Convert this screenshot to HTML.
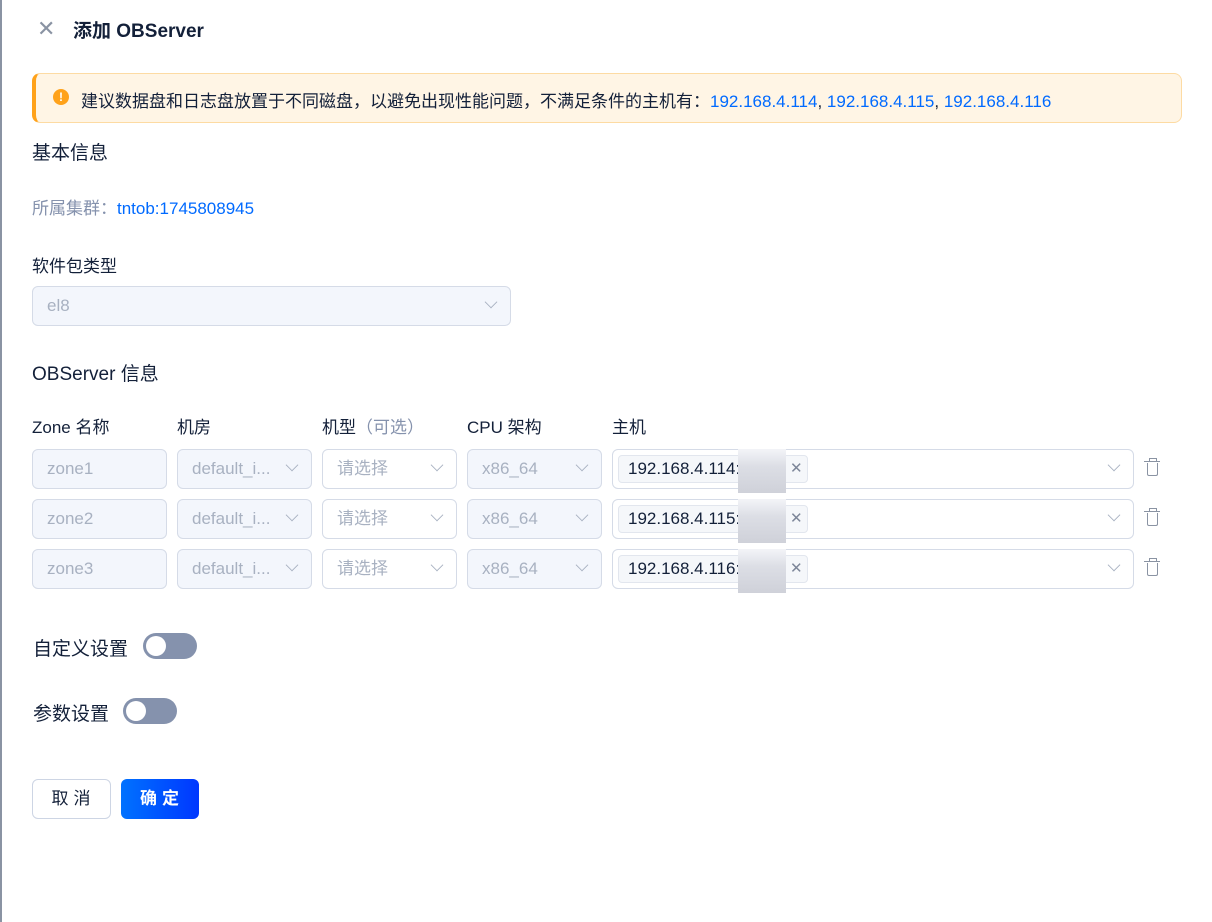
<!DOCTYPE html>
<html><head><meta charset="utf-8"><style>
*{box-sizing:border-box;margin:0;padding:0}
body{width:1212px;height:922px;background:#fff;font-family:"Liberation Sans","Noto Sans CJK SC",sans-serif;color:#132039;position:relative;overflow:hidden;font-size:17px}
.a{position:absolute}
.lb{border-left:2px solid #8a93a3;position:absolute;left:0;top:0;height:922px}
.inp{position:absolute;height:40px;border:1px solid #d5dbe7;border-radius:6px;background:#f3f6fc;color:#a8b1c1;font-size:17px;line-height:38px;padding-left:14px}
.arr{position:absolute;right:14px;top:10px;width:10px;height:10px;border-right:1.3px solid #a8b1c1;border-bottom:1.3px solid #a8b1c1;transform:rotate(45deg) scale(.9)}
.host{background:#fff;border-color:#d5dbe7;color:#132039}
.tag{position:absolute;left:5px;top:5px;height:28px;width:190px;background:#f5f7fa;border:1px solid #e2e6ee;border-radius:4px;font-size:17px;line-height:26px;padding-left:9px}
.blur{position:absolute;left:119px;top:-7px;width:48px;height:44px;background:linear-gradient(#f3f4f8,#dcdee5 40%,#cfd1d9)}
.x{position:absolute;left:171px;top:0;color:#7d8699;font-size:15px}
.trash{position:absolute;width:11px;height:13px;border:1.5px solid #8a93a3;border-top:none;border-radius:0 0 2px 2px}
.trash:before{content:"";position:absolute;left:-4px;top:-2px;width:16px;border-top:1.5px solid #8a93a3}
.trash:after{content:"";position:absolute;left:1px;top:-5px;width:6px;height:3px;border:1.5px solid #8a93a3;border-bottom:none}
.sw{position:absolute;width:54px;height:26px;border-radius:13px;background:#8592ad}
.sw:after{content:"";position:absolute;left:3px;top:3px;width:20px;height:20px;border-radius:50%;background:#fff}
.h{font-size:19px}
</style></head><body>
<div class="lb"></div>
<div class="a" style="left:37px;top:19px;font-size:22px;color:#8a93a3;line-height:20px;font-weight:300">✕</div>
<div class="a" style="left:73px;top:16px;font-size:19px;font-weight:bold">添加 OBServer</div>
<div class="a" style="left:32px;top:73px;width:1150px;height:50px;background:#fff5e5;border:1px solid #fddba3;border-left:4px solid #ffa21a;border-radius:8px"></div>
<div class="a" style="left:53px;top:89px;width:16px;height:16px;border-radius:50%;background:#ffa21a;color:#fff;font-size:12px;font-weight:bold;text-align:center;line-height:16px">!</div>
<div class="a" style="left:81px;top:87px">建议数据盘和日志盘放置于不同磁盘，以避免出现性能问题，不满足条件的主机有：<span style="color:#006aff">192.168.4.114</span>, <span style="color:#006aff">192.168.4.115</span>, <span style="color:#006aff">192.168.4.116</span></div>
<div class="a h" style="left:32px;top:138px">基本信息</div>
<div class="a" style="left:32px;top:194px;color:#8592ad">所属集群：<span style="color:#006aff">tntob:1745808945</span></div>
<div class="a" style="left:32px;top:252px">软件包类型</div>
<div class="inp" style="left:32px;top:286px;width:479px">el8<div class="arr"></div></div>
<div class="a h" style="left:32px;top:359px">OBServer 信息</div>
<div class="a" style="left:32px;top:413px">Zone 名称</div>
<div class="a" style="left:177px;top:413px">机房</div>
<div class="a" style="left:322px;top:413px">机型<span style="color:#8592ad">（可选）</span></div>
<div class="a" style="left:467px;top:413px">CPU 架构</div>
<div class="a" style="left:612px;top:413px">主机</div>

<div class="inp" style="left:32px;top:449px;width:135px">zone1</div>
<div class="inp" style="left:177px;top:449px;width:135px">default_i...<div class="arr"></div></div>
<div class="inp" style="left:322px;top:449px;width:135px;background:#fff">请选择<div class="arr"></div></div>
<div class="inp" style="left:467px;top:449px;width:135px">x86_64<div class="arr"></div></div>
<div class="inp host" style="left:612px;top:449px;width:522px"><div class="tag">192.168.4.114:<div class="blur"></div><div class="x">✕</div></div><div class="arr"></div></div>
<div class="trash" style="left:1147px;top:463px"></div>

<div class="inp" style="left:32px;top:499px;width:135px">zone2</div>
<div class="inp" style="left:177px;top:499px;width:135px">default_i...<div class="arr"></div></div>
<div class="inp" style="left:322px;top:499px;width:135px;background:#fff">请选择<div class="arr"></div></div>
<div class="inp" style="left:467px;top:499px;width:135px">x86_64<div class="arr"></div></div>
<div class="inp host" style="left:612px;top:499px;width:522px"><div class="tag">192.168.4.115:<div class="blur"></div><div class="x">✕</div></div><div class="arr"></div></div>
<div class="trash" style="left:1147px;top:513px"></div>

<div class="inp" style="left:32px;top:549px;width:135px">zone3</div>
<div class="inp" style="left:177px;top:549px;width:135px">default_i...<div class="arr"></div></div>
<div class="inp" style="left:322px;top:549px;width:135px;background:#fff">请选择<div class="arr"></div></div>
<div class="inp" style="left:467px;top:549px;width:135px">x86_64<div class="arr"></div></div>
<div class="inp host" style="left:612px;top:549px;width:522px"><div class="tag">192.168.4.116:<div class="blur"></div><div class="x">✕</div></div><div class="arr"></div></div>
<div class="trash" style="left:1147px;top:563px"></div>

<div class="a h" style="left:33px;top:634px">自定义设置</div>
<div class="sw" style="left:143px;top:633px"></div>
<div class="a h" style="left:33px;top:699px">参数设置</div>
<div class="sw" style="left:123px;top:698px"></div>
<div class="a" style="left:32px;top:779px;width:79px;height:40px;border:1px solid #cdd5e4;border-radius:6px;text-align:center;line-height:38px;letter-spacing:5px;padding-left:4px">取消</div>
<div class="a" style="left:121px;top:779px;width:78px;height:40px;background:linear-gradient(90deg,#0072ff,#0037ff);border-radius:6px;color:#fff;text-align:center;line-height:40px;letter-spacing:5px;padding-left:4px;font-weight:bold">确定</div>
</body></html>
